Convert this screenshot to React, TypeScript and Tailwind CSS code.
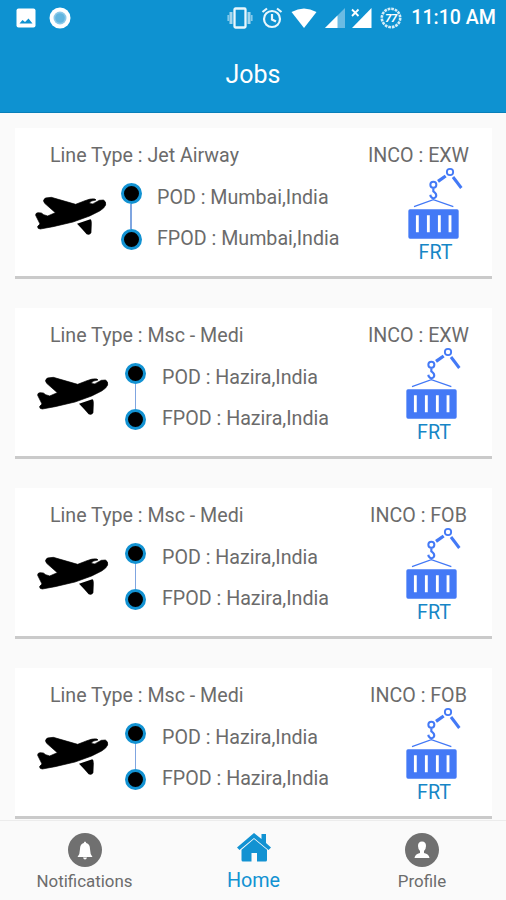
import React from "react";

type Job = { line: string; inco: string; place: string; wide: boolean };

const jobs: Job[] = [
  { line: "Jet Airway", inco: "EXW", place: "Mumbai,India", wide: true },
  { line: "Msc - Medi", inco: "EXW", place: "Hazira,India", wide: false },
  { line: "Msc - Medi", inco: "FOB", place: "Hazira,India", wide: false },
  { line: "Msc - Medi", inco: "FOB", place: "Hazira,India", wide: false },
];

function Plane() {
  return (
    <svg viewBox="46 78 216 120" className="mt-7 h-10 w-[72px] shrink-0">
      <path d="M48 136Q47 129 55 128L65 129L72 134L84 138L107 128L75 100Q67 91 77 84L95 82L168 103L196 92Q212 85 226 87L229 90Q213 92 209 99Q218 105 226 98L239 91L251 90Q260 94 258 105Q254 115 240 123L210 138L160 156L100 170L62 177Q53 177 54 169L61 162Z" stroke="#000" strokeWidth="2" strokeLinejoin="round" />
      <path d="M172 161L212 148Q217 150 216 165L215 188Q210 197 201 193L187 177Z" />
    </svg>
  );
}

function Route() {
  return (
    <div className="mt-[15px] flex w-[22px] shrink-0 flex-col items-center">
      <span className="size-[21px] rounded-full border-[3px] border-[#1292d2] bg-black" />
      <span className="h-[25px] w-[1.5px] bg-[#7fa5e0]" />
      <span className="size-[21px] rounded-full border-[3px] border-[#1292d2] bg-black" />
    </div>
  );
}

function Crane() {
  return (
    <svg viewBox="50 20 170 216" className="-mt-[1.3px] mb-[1.3px] h-[72px] w-[56.7px]" fill="none" stroke="#4379f6">
      <circle cx="179" cy="35" r="9.5" strokeWidth="5.5" />
      <circle cx="129" cy="73" r="9" strokeWidth="6" />
      <path d="M143 63L166 47" strokeWidth="10" />
      <path d="M188 50L213 83" strokeWidth="9" />
      <path d="M129 84V93Q140 100 137 109Q129 119 121 108L120 103" strokeWidth="6.5" />
      <path d="M71 139L129 118L189 139" strokeWidth="3.8" />
      <rect x="54" y="147" width="151" height="88" rx="5" fill="#4379f6" stroke="none" />
      <path d="M81 165V216M114 165V216M147 165V216M179 165V216" stroke="#fff" strokeWidth="8.5" />
    </svg>
  );
}

function JobCard({ job }: { job: Job }) {
  return (
    <article className="flex h-[151px] shrink-0 flex-col border-b-[3px] border-[#cacaca] bg-white pt-4 text-[19.65px] text-[#6b6b6b]">
      <div className="flex h-6 justify-between pl-[35px] leading-6">
        <span className="whitespace-nowrap">Line Type : {job.line}</span>
        <span className="w-[147px] whitespace-nowrap text-center">INCO : {job.inco}</span>
      </div>
      <div className={job.wide ? "flex h-[98px] pl-[20px]" : "flex h-[98px] pl-[21.5px]"}>
        <Plane />
        <div className={job.wide ? "ml-[13px] flex" : "ml-[16px] flex"}>
          <Route />
          <div className={job.wide ? "ml-[15px] mt-[8.5px] whitespace-nowrap leading-[41px]" : "ml-[15.5px] mt-[8.5px] whitespace-nowrap leading-[41px]"}>
            <p>POD : {job.place}</p>
            <p>FPOD : {job.place}</p>
          </div>
        </div>
        <div className={job.wide ? "ml-auto mr-[28.5px] flex w-[57px] flex-col items-center" : "ml-auto mr-[30px] flex w-[57px] flex-col items-center"}>
          <Crane />
          <span className="pl-px pt-px leading-6 text-[#1686c6]">FRT</span>
        </div>
      </div>
    </article>
  );
}

function StatusBar() {
  return (
    <div className="flex h-[35px] items-center pl-4">
      <svg viewBox="0 0 20 20" className="size-5">
        <rect x=".5" y=".5" width="19" height="19" rx="2" fill="#fff" />
        <path d="M3.5 15.5L6.5 12L9 14L12.5 10.5L16.5 15.5Z" fill="#0e92d1" />
      </svg>
      <svg viewBox="0 0 22 22" className="ml-[13px] size-[22px]">
        <circle cx="11" cy="11" r="10.5" fill="#fff" />
        <circle cx="11" cy="11" r="6.5" fill="#8bc9e9" />
        <circle cx="11" cy="11" r="4.8" fill="#62b5df" />
      </svg>
      <div className="ml-auto flex items-center pr-[10px]">
        <svg viewBox="0 0 26 22" className="h-[22px] w-[26px]" fill="none" stroke="#e8f6fc">
          <rect x="7.5" y="1.5" width="11" height="19" rx="1" strokeWidth="2.3" />
          <path d="M4 5V17M22 5V17" stroke="#a3d6ee" strokeWidth="3" />
          <path d="M1.3 8V14M24.7 8V14" stroke="#86c9e9" strokeWidth="1.8" />
        </svg>
        <svg viewBox="0 0 22 22" className="ml-[8.5px] size-[22px]" fill="none" stroke="#e8f6fc" strokeWidth="2.2">
          <circle cx="11" cy="12" r="8" />
          <path d="M1.5 5L6 1.5M20.5 5L16 1.5M11 7V12.5L15 14.5" />
        </svg>
        <svg viewBox="0 0 26 20" className="ml-[8px] h-5 w-[26px]">
          <path d="M.5 4Q13-3 25.5 4L13 20Z" fill="#fff" />
        </svg>
        <svg viewBox="0 0 20 20" className="ml-[8px] size-5">
          <path d="M0 20L20 0V20Z" fill="#6bbbe3" />
          <path d="M0 20L12.5 7.5V20Z" fill="#fff" />
        </svg>
        <svg viewBox="0 0 21 20" className="ml-[6px] h-5 w-[21px]">
          <path d="M1 20L20.5 0V20Z" fill="#fff" />
          <path d="M1 1.5L7.5 8M7.5 1.5L1 8" stroke="#fff" strokeWidth="1.8" />
        </svg>
        <svg viewBox="0 0 22 22" className="ml-[8px] size-[22px]">
          <circle cx="11" cy="11" r="9.2" fill="none" stroke="#d5edf8" strokeWidth="2.6" strokeDasharray="2.7 .91" />
          <text x="10.7" y="15" textAnchor="middle" fill="#fff" className="text-[11.5px] font-bold italic tracking-[-0.6px]">77</text>
        </svg>
        <span className="ml-[9px] whitespace-nowrap pt-px text-[19.6px] font-medium leading-6">11:10 AM</span>
      </div>
    </div>
  );
}

export default function App() {
  return (
    <div className="flex h-[900px] w-[506px] flex-col overflow-hidden bg-[#fafafa] font-[Roboto,sans-serif]">
      <header className="h-[113px] shrink-0 border-b border-[#087fb9] bg-[#0e92d1] text-white">
        <StatusBar />
        <h1 className="flex h-[79px] items-center justify-center text-[25px] leading-none">Jobs</h1>
      </header>
      <main className="flex h-[707px] shrink-0 flex-col gap-[29px] overflow-hidden pl-[15px] pr-[14px] pt-[15px]">
        {jobs.map((job, i) => (
          <JobCard key={i} job={job} />
        ))}
      </main>
      <nav className="flex h-20 shrink-0 border-t border-[#ececec] text-[#6c6c6c]">
        <div className="flex w-[169px] flex-col items-center pt-3">
          <svg viewBox="0 0 34 34" className="size-[34px]">
            <circle cx="17" cy="17" r="17" fill="#707070" />
            <path d="M17 8.5Q18 8.5 18.2 10Q22 11 22 16Q22 21 24.5 24H9.5Q12 21 12 16Q12 11 15.8 10Q16 8.5 17 8.5ZM15 24.5H19Q18.5 26.5 17 26.5T15 24.5Z" fill="#fff" />
          </svg>
          <span className="mt-[2px] text-[16.9px] leading-6">Notifications</span>
        </div>
        <div className="flex w-[169px] flex-col items-center pt-3 text-[#1292d2]">
          <svg viewBox="0 0 34 29" className="h-[29px] w-[34px]" fill="#1292d2">
            <path d="M17 0L24.5 6V1H29V10L34 14.5L31.5 17L17 5L2.5 17L0 14.5Z" />
            <path d="M17 6L30 16.8V27Q30 28.5 28.5 28.5H20V20H14.5V28.5H6Q4.5 28.5 4.5 27V16.8Z" />
          </svg>
          <span className="mt-[7px] text-[19.8px] leading-6">Home</span>
        </div>
        <div className="flex w-[168px] flex-col items-center pt-3">
          <svg viewBox="0 0 34 34" className="size-[34px]">
            <circle cx="17" cy="17" r="17" fill="#707070" />
            <path d="M17 8.5Q21 8.5 21 13Q21 16 19 18V20Q24 21 24.5 25H9.5Q10 21 15 20V18Q13 16 13 13Q13 8.5 17 8.5Z" fill="#fff" />
          </svg>
          <span className="mt-[2px] text-[16.9px] leading-6">Profile</span>
        </div>
      </nav>
    </div>
  );
}
